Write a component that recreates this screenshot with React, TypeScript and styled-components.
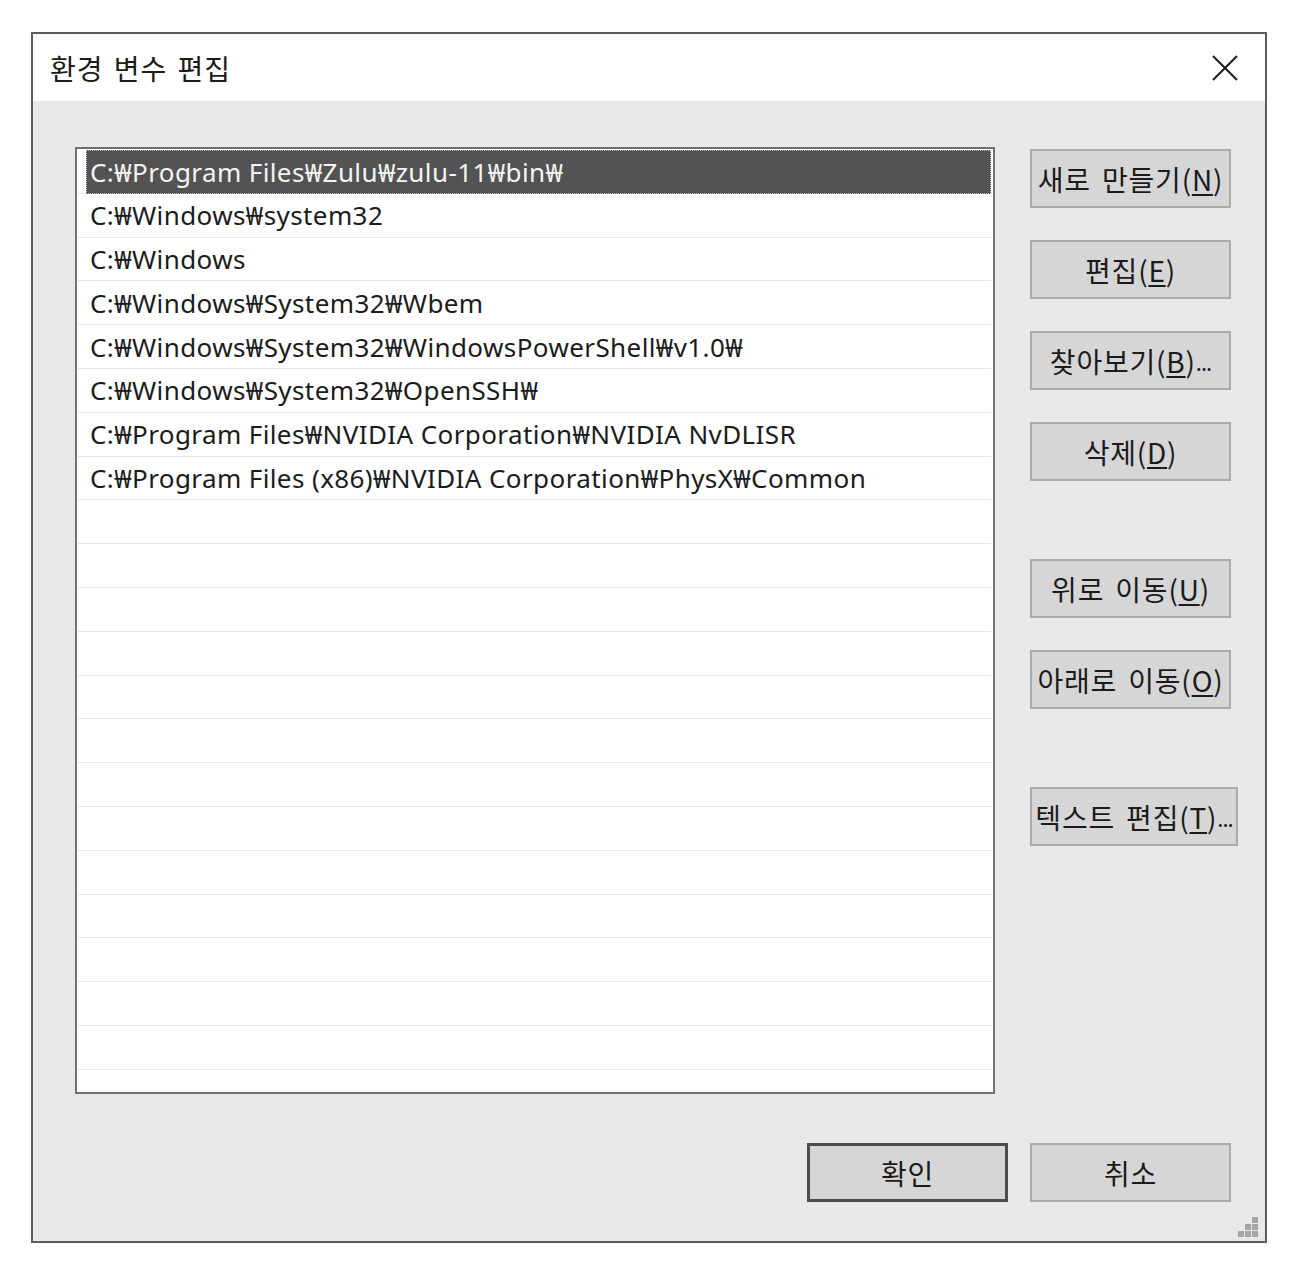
import React from "react"
import styled, { createGlobalStyle } from "styled-components"

const GlobalStyle = createGlobalStyle`
  html, body {
    margin: 0;
    padding: 0;
    background: #ffffff;
  }
  * {
    box-sizing: border-box;
  }
`

const Page = styled.div`
  padding: 32px 0 0 31px;
  font-family: "Noto Sans CJK KR", "Noto Sans", sans-serif;
  color: #1b1b1b;
`

const Dialog = styled.div`
  width: 1236px;
  height: 1211px;
  border: 2px solid #5c5c5c;
  display: flex;
  flex-direction: column;
  position: relative;
  background: #e9e9e9;
`

const TitleBar = styled.div`
  height: 67px;
  background: #ffffff;
  display: flex;
  align-items: center;
  justify-content: space-between;
  padding: 0 26px 0 17px;
  flex-shrink: 0;
`

const Title = styled.div`
  font-size: 28px;
  letter-spacing: 1px;
  word-spacing: 3px;
`

const CloseButton = styled.button`
  border: none;
  background: transparent;
  padding: 0;
  width: 28px;
  height: 28px;
  display: flex;
  align-items: center;
  justify-content: center;
`

const Body = styled.div`
  flex: 1;
  padding: 46px 34px 0 42px;
  display: flex;
  flex-direction: column;
`

const Main = styled.div`
  display: flex;
  gap: 35px;
  align-items: flex-start;
`

const ListBox = styled.div`
  width: 920px;
  height: 947px;
  flex-shrink: 0;
  border: 2px solid #717171;
  background: #ffffff;
  overflow: hidden;
  padding: 1px 2px 0 1px;
`

const Row = styled.div`
  height: 43.8px;
  border-bottom: 1px solid #e6e6e6;
  display: flex;
  align-items: stretch;
  padding-left: 8px;
`

const Cell = styled.div<{ $selected?: boolean }>`
  flex: 1;
  display: flex;
  align-items: center;
  padding-left: 4px;
  font-family: "Noto Sans", "Noto Sans CJK KR", sans-serif;
  font-size: 26px;
  letter-spacing: 0.4px;
  white-space: nowrap;
  margin-bottom: ${({ $selected }) => ($selected ? "-1px" : "0")};
  background: ${({ $selected }) => ($selected ? "#535353" : "transparent")};
  color: ${({ $selected }) => ($selected ? "#f4f4f4" : "#1b1b1b")};
  outline: ${({ $selected }) => ($selected ? "1px dotted #bdbdbd" : "none")};
  outline-offset: -1px;
`

const Side = styled.div`
  display: flex;
  flex-direction: column;
  align-items: flex-start;
  padding-top: 2px;
`

const Button = styled.button<{ $width?: number; $gap?: number; $default?: boolean }>`
  width: ${({ $width }) => $width ?? 201}px;
  height: 59px;
  margin-top: ${({ $gap }) => $gap ?? 0}px;
  flex-shrink: 0;
  background: #d6d6d6;
  border: ${({ $default }) => ($default ? "3px solid #4d4d4d" : "2px solid #ababab")};
  font-family: "Noto Sans CJK KR", "Noto Sans", sans-serif;
  font-size: 28px;
  letter-spacing: 0.8px;
  word-spacing: 4px;
  color: #1b1b1b;
  padding: 0;
  white-space: nowrap;
  display: flex;
  align-items: center;
  justify-content: center;
  u {
    text-underline-offset: 3px;
  }
`

const Ellipsis = styled.span`
  font-size: 22px;
  letter-spacing: -1px;
`

const Footer = styled.div`
  display: flex;
  justify-content: flex-end;
  gap: 22px;
  margin-top: 49px;
`

const Grip = styled.svg`
  position: absolute;
  right: 6px;
  bottom: 3px;
`

const paths = [
  "C:₩Program Files₩Zulu₩zulu-11₩bin₩",
  "C:₩Windows₩system32",
  "C:₩Windows",
  "C:₩Windows₩System32₩Wbem",
  "C:₩Windows₩System32₩WindowsPowerShell₩v1.0₩",
  "C:₩Windows₩System32₩OpenSSH₩",
  "C:₩Program Files₩NVIDIA Corporation₩NVIDIA NvDLISR",
  "C:₩Program Files (x86)₩NVIDIA Corporation₩PhysX₩Common",
]

const TOTAL_ROWS = 22

export default function App() {
  const rows = Array.from({ length: TOTAL_ROWS }, (_, i) => paths[i] ?? "")

  return (
    <Page>
      <GlobalStyle />
      <Dialog>
        <TitleBar>
          <Title>환경 변수 편집</Title>
          <CloseButton aria-label="닫기">
            <svg width="26" height="26" viewBox="0 0 26 26">
              <path d="M1 1 L25 25 M25 1 L1 25" stroke="#1b1b1b" strokeWidth="2" />
            </svg>
          </CloseButton>
        </TitleBar>
        <Body>
          <Main>
            <ListBox>
              {rows.map((p, i) => (
                <Row key={i}>
                  <Cell $selected={i === 0}>{p}</Cell>
                </Row>
              ))}
            </ListBox>
            <Side>
              <Button>새로 만들기(<u>N</u>)</Button>
              <Button $gap={32}>편집(<u>E</u>)</Button>
              <Button $gap={32}>찾아보기(<u>B</u>)<Ellipsis>...</Ellipsis></Button>
              <Button $gap={32}>삭제(<u>D</u>)</Button>
              <Button $gap={78}>위로 이동(<u>U</u>)</Button>
              <Button $gap={32}>아래로 이동(<u>O</u>)</Button>
              <Button $gap={78} $width={208}>텍스트 편집(<u>T</u>)<Ellipsis>...</Ellipsis></Button>
            </Side>
          </Main>
          <Footer>
            <Button $default>확인</Button>
            <Button>취소</Button>
          </Footer>
        </Body>
        <Grip width="21" height="21" viewBox="0 0 21 21">
          <rect x="14" y="0" width="6" height="6" fill="#a6a6a6" />
          <rect x="7" y="7" width="6" height="6" fill="#a6a6a6" />
          <rect x="14" y="7" width="6" height="6" fill="#a6a6a6" />
          <rect x="0" y="14" width="6" height="6" fill="#a6a6a6" />
          <rect x="7" y="14" width="6" height="6" fill="#a6a6a6" />
          <rect x="14" y="14" width="6" height="6" fill="#a6a6a6" />
        </Grip>
      </Dialog>
    </Page>
  )
}
